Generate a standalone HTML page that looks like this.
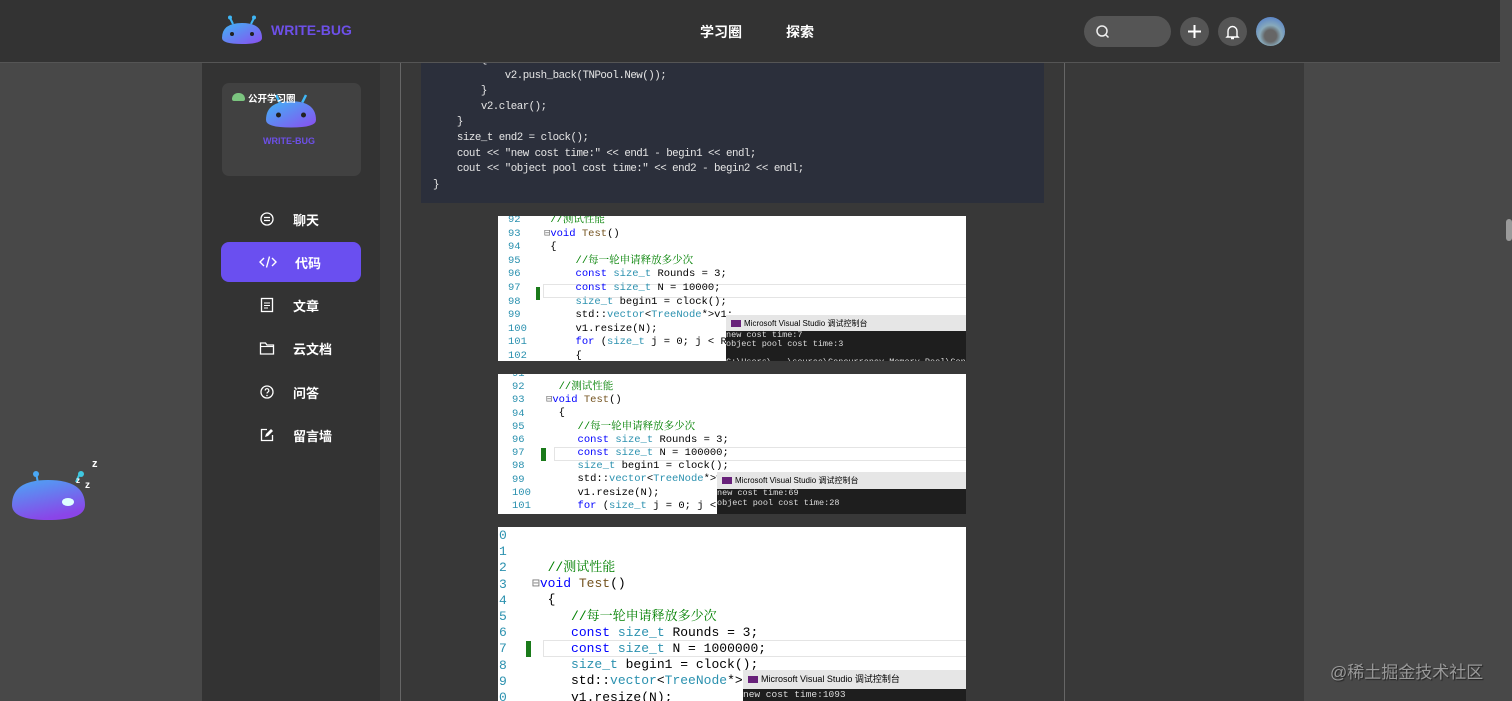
<!DOCTYPE html>
<html><head><meta charset="utf-8"><style>
*{margin:0;padding:0;box-sizing:border-box}
body{width:1512px;height:701px;overflow:hidden;background:#484848;font-family:"Liberation Sans","Noto Sans CJK SC",sans-serif;position:relative}
.abs{position:absolute}
#hdr{left:0;top:0;width:1500px;height:63px;background:#333;border-bottom:1px solid #555}
#side{left:202px;top:63px;width:178px;height:638px;background:#333}
#gap{left:380px;top:63px;width:20px;height:638px;background:#3a3a3a}
#main{left:400px;top:63px;width:665px;height:638px;background:#383838;border-left:1px solid #666;border-right:1px solid #666}
#right{left:1065px;top:63px;width:239px;height:638px;background:#393939}
.codebox{left:421px;top:63px;width:623px;height:140px;background:#2b2f3b;overflow:hidden}
.code{position:absolute;left:12px;top:-10px;color:#e6e6e6;font-family:"Liberation Mono",monospace;font-size:10.8px;letter-spacing:-0.5px;line-height:15.6px;white-space:pre}
.nav{left:221px;width:140px;height:40px;border-radius:8px;color:#fff;font-size:13px;font-weight:bold;display:flex;align-items:center}
.nav svg{margin-left:38px;margin-right:18px}
.img{background:#fff;overflow:hidden;font-family:"Liberation Mono","Noto Serif CJK SC",monospace;white-space:pre}
.ln{position:absolute;color:#2b91af}
.cm{color:#008000}
.kw{color:#0000ff}
.ty{color:#2b91af}
.vs{position:absolute;background:#1e1e1e;color:#ddd}
.vsh{background:#e6e6e6;color:#000;font-family:"Liberation Sans","Noto Sans CJK SC",sans-serif;display:flex;align-items:center}
.vsh i{display:inline-block;background:#68217a;width:10px;height:7px;margin:0 3px 0 5px}
</style></head><body>
<div id="hdr" class="abs"></div>
<div class="abs" style="left:1500px;top:0;width:12px;height:701px;background:#484848"></div>
<div class="abs" style="left:1506px;top:219px;width:6px;height:22px;background:#9a9a9a;border-radius:3px"></div>
<svg class="abs" style="left:220px;top:14px" width="44" height="32" viewBox="0 0 44 32"><defs><linearGradient id="g" x1="0" y1="0" x2="1" y2="1"><stop offset="0" stop-color="#3fb6f5"/><stop offset="1" stop-color="#8a4df0"/></linearGradient></defs><line x1="10" y1="4" x2="13" y2="10" stroke="#3fb6f5" stroke-width="2"/><line x1="34" y1="4" x2="31" y2="10" stroke="#3fb6f5" stroke-width="2"/><circle cx="10" cy="3.5" r="2" fill="#3fb6f5"/><circle cx="34" cy="3.5" r="2" fill="#3fb6f5"/><path d="M2 24 Q2 9 22 9 Q42 9 42 24 Q42 30 22 30 Q2 30 2 24Z" fill="url(#g)"/><circle cx="12" cy="20" r="2" fill="#222"/><circle cx="32" cy="20" r="2" fill="#222"/></svg>
<div class="abs" style="left:271px;top:22px;color:#6d50e8;font-weight:bold;font-size:14px">WRITE-BUG</div>
<div class="abs" style="left:700px;top:22px;color:#fff;font-weight:bold;font-size:14px">学习圈</div>
<div class="abs" style="left:786px;top:22px;color:#fff;font-weight:bold;font-size:14px">探索</div>
<div class="abs" style="left:1084px;top:16px;width:87px;height:31px;border-radius:16px;background:#555"></div>
<svg class="abs" style="left:1095px;top:24px" width="16" height="16" viewBox="0 0 16 16"><circle cx="7" cy="7" r="5" fill="none" stroke="#eee" stroke-width="1.5"/><line x1="11" y1="11" x2="13.5" y2="13.5" stroke="#eee" stroke-width="1.5"/></svg>
<div class="abs" style="left:1180px;top:17px;width:29px;height:29px;border-radius:50%;background:#555"></div>
<svg class="abs" style="left:1180px;top:17px" width="29" height="29"><path d="M14.5 8v13M8 14.5h13" stroke="#fff" stroke-width="2"/></svg>
<div class="abs" style="left:1218px;top:17px;width:29px;height:29px;border-radius:50%;background:#555"></div>
<svg class="abs" style="left:1218px;top:17px" width="29" height="29"><path d="M10 19V14a4.5 4.5 0 0 1 9 0v5l1 1H9zM13 21.5h3" fill="none" stroke="#fff" stroke-width="1.4"/></svg>
<div class="abs" style="left:1256px;top:17px;width:29px;height:29px;border-radius:50%;background:radial-gradient(circle at 50% 65%,#666 0 25%,#8ab 45%,#5c86c8 80%)"></div>

<div id="side" class="abs"></div>
<div id="gap" class="abs"></div>
<div id="main" class="abs"></div>
<div id="right" class="abs"></div>

<div class="abs" style="left:222px;top:83px;width:139px;height:93px;border-radius:7px;background:#414141"></div>
<svg class="abs" style="left:262px;top:90px" width="58" height="40" viewBox="0 0 44 32"><line x1="10" y1="4" x2="13" y2="10" stroke="#3fb6f5" stroke-width="2"/><line x1="34" y1="4" x2="31" y2="10" stroke="#3fb6f5" stroke-width="2"/><path d="M2 24 Q2 9 22 9 Q42 9 42 24 Q42 30 22 30 Q2 30 2 24Z" fill="url(#g)"/><circle cx="12" cy="20" r="2" fill="#222"/><circle cx="32" cy="20" r="2" fill="#222"/></svg>
<div class="abs" style="left:263px;top:136px;color:#6d50e8;font-weight:bold;font-size:9px">WRITE-BUG</div>
<div class="abs" style="left:232px;top:93px;width:13px;height:8px;border-radius:6px 6px 2px 2px;background:#7bc47f"></div>
<div class="abs" style="left:248px;top:91px;color:#fff;font-weight:bold;font-size:9.5px">公开学习圈</div>

<div class="abs nav" style="top:199px"><svg width="16" height="16"><circle cx="8" cy="8" r="6" fill="none" stroke="#fff" stroke-width="1.3"/><path d="M5 6.5h6M5 9.5h6" stroke="#fff" stroke-width="1.2"/></svg>聊天</div>
<div class="abs nav" style="top:242px;background:#6a4ff0"><svg width="18" height="16"><path d="M5 4L1 8l4 4M13 4l4 4-4 4M10.5 2.5l-3 11" fill="none" stroke="#fff" stroke-width="1.4"/></svg>代码</div>
<div class="abs nav" style="top:285px"><svg width="16" height="16"><rect x="2.5" y="1.5" width="11" height="13" fill="none" stroke="#fff" stroke-width="1.3"/><path d="M5 6h6M5 8.5h6M5 11h4" stroke="#fff" stroke-width="1.1"/></svg>文章</div>
<div class="abs nav" style="top:328px"><svg width="16" height="16"><path d="M1.5 3h5l1.5 2h6.5v9h-13z" fill="none" stroke="#fff" stroke-width="1.3"/><path d="M1.5 6.5h13" stroke="#fff" stroke-width="1.1"/></svg>云文档</div>
<div class="abs nav" style="top:372px"><svg width="16" height="16"><circle cx="8" cy="8" r="6" fill="none" stroke="#fff" stroke-width="1.3"/><path d="M6.2 6.5a1.8 1.8 0 1 1 2.6 1.6c-.6.3-.8.7-.8 1.4" fill="none" stroke="#fff" stroke-width="1.2"/><circle cx="8" cy="11.5" r=".8" fill="#fff"/></svg>问答</div>
<div class="abs nav" style="top:415px"><svg width="16" height="16"><path d="M8 2.5H2.5v11h11V8" fill="none" stroke="#fff" stroke-width="1.3"/><path d="M6 10l1-3 5-5 2 2-5 5z" fill="#fff"/></svg>留言墙</div>

<svg class="abs" style="left:10px;top:455px" width="95" height="70" viewBox="0 0 95 70"><defs><linearGradient id="g2" x1="0" y1="0" x2="0.4" y2="1"><stop offset="0" stop-color="#4aa8f5"/><stop offset="1" stop-color="#8a45e8"/></linearGradient></defs><line x1="26" y1="18" x2="28" y2="28" stroke="#4aa8f5" stroke-width="2"/><circle cx="26" cy="19" r="3" fill="#4aa8f5"/><line x1="70" y1="18" x2="66" y2="27" stroke="#3fc8e0" stroke-width="2"/><circle cx="71" cy="19" r="3" fill="#3fc8e0"/><path d="M2 50 Q2 25 38 25 Q75 25 75 50 Q75 65 38 65 Q2 65 2 50Z" fill="url(#g2)"/><text x="82" y="12" fill="#fff" font-size="11" font-weight="bold" font-family="Liberation Sans">z</text><text x="75" y="33" fill="#fff" font-size="10" font-weight="bold" font-family="Liberation Sans">z</text><text x="66" y="28" fill="#fff" font-size="8" font-weight="bold" font-family="Liberation Sans">z</text><ellipse cx="58" cy="47" rx="6" ry="4" fill="#dff"/></svg>

<div class="abs codebox"><div class="code">        {
            v2.push_back(TNPool.New());
        }
        v2.clear();
    }
    size_t end2 = clock();
    cout &lt;&lt; "new cost time:" &lt;&lt; end1 - begin1 &lt;&lt; endl;
    cout &lt;&lt; "object pool cost time:" &lt;&lt; end2 - begin2 &lt;&lt; endl;
}</div></div>

<div class="abs img" style="left:498px;top:216px;width:468px;height:145px;font-size:10.5px;line-height:13.6px">
<div class="ln" style="left:10px;top:-2px">92
93
94
95
96
97
98
99
100
101
102</div>
<div style="position:absolute;left:38px;top:71px;width:4px;height:13px;background:#1a7a1a"></div>
<div style="position:absolute;left:45px;top:68px;width:423px;height:14px;border:1px solid #e4e4e4;border-right:none"></div>
<div style="position:absolute;left:46px;top:-2px;color:#000"> <span class="cm">//测试性能</span>
<span style="color:#777">⊟</span><span class="kw">void</span> <span style="color:#74531f">Test</span>()
 {
     <span class="cm">//每一轮申请释放多少次</span>
     <span class="kw">const</span> <span class="ty">size_t</span> Rounds = 3;
     <span class="kw">const</span> <span class="ty">size_t</span> N = 10000;
     <span class="ty">size_t</span> begin1 = clock();
     std::<span class="ty">vector</span>&lt;<span class="ty">TreeNode</span>*&gt;v1;
     v1.resize(N);
     <span class="kw">for</span> (<span class="ty">size_t</span> j = 0; j &lt; Rounds
     {</div>
<div class="vs" style="left:228px;top:99px;width:240px;height:46px;font-size:8.5px;line-height:9px"><div class="vsh" style="height:16px;font-size:8px"><i></i>Microsoft Visual Studio 调试控制台</div>new cost time:7
object pool cost time:3

C:\Users\...\source\Concurrency_Memory_Pool\Concurre</div>
</div>

<div class="abs img" style="left:498px;top:374px;width:468px;height:140px;font-size:10.5px;line-height:13.2px">
<div class="ln" style="left:14px;top:-6px">91
92
93
94
95
96
97
98
99
100
101</div>
<div style="position:absolute;left:43px;top:74px;width:5px;height:13px;background:#1a7a1a"></div>
<div style="position:absolute;left:56px;top:73px;width:412px;height:14px;border:1px solid #e4e4e4;border-right:none"></div>
<div style="position:absolute;left:48px;top:7px;color:#000">  <span class="cm">//测试性能</span>
<span style="color:#777">⊟</span><span class="kw">void</span> <span style="color:#74531f">Test</span>()
  {
     <span class="cm">//每一轮申请释放多少次</span>
     <span class="kw">const</span> <span class="ty">size_t</span> Rounds = 3;
     <span class="kw">const</span> <span class="ty">size_t</span> N = 100000;
     <span class="ty">size_t</span> begin1 = clock();
     std::<span class="ty">vector</span>&lt;<span class="ty">TreeNode</span>*&gt;v1;
     v1.resize(N);
     <span class="kw">for</span> (<span class="ty">size_t</span> j = 0; j &lt; Rou</div>
<div class="vs" style="left:219px;top:98px;width:249px;height:42px;font-size:8.5px;line-height:9.5px"><div class="vsh" style="height:17px;font-size:8px"><i></i>Microsoft Visual Studio 调试控制台</div>new cost time:69
object pool cost time:28</div>
</div>

<div class="abs img" style="left:498px;top:527px;width:468px;height:174px;font-size:13px;line-height:16.2px">
<div class="ln" style="left:1px;top:1px">0
1
2
3
4
5
6
7
8
9
0</div>
<div style="position:absolute;left:28px;top:114px;width:5px;height:16px;background:#1a7a1a"></div>
<div style="position:absolute;left:45px;top:113px;width:423px;height:17px;border:1px solid #e4e4e4;border-right:none"></div>
<div style="position:absolute;left:34px;top:33px;color:#000"><span class="cm">  //测试性能</span>
<span style="color:#777">⊟</span><span class="kw">void</span> <span style="color:#74531f">Test</span>()
  {
     <span class="cm">//每一轮申请释放多少次</span>
     <span class="kw">const</span> <span class="ty">size_t</span> Rounds = 3;
     <span class="kw">const</span> <span class="ty">size_t</span> N = 1000000;
     <span class="ty">size_t</span> begin1 = clock();
     std::<span class="ty">vector</span>&lt;<span class="ty">TreeNode</span>*&gt;v1;
     v1.resize(N);</div>
<div class="vs" style="left:245px;top:143px;width:223px;height:31px;font-size:9.5px;line-height:11px"><div class="vsh" style="height:19px;font-size:9px"><i></i>Microsoft Visual Studio 调试控制台</div>new cost time:1093</div>
</div>

<div class="abs" style="left:1330px;top:658px;color:#999;font-size:17px;text-shadow:1px 1px 1px #222">@稀土掘金技术社区</div>
</body></html>
